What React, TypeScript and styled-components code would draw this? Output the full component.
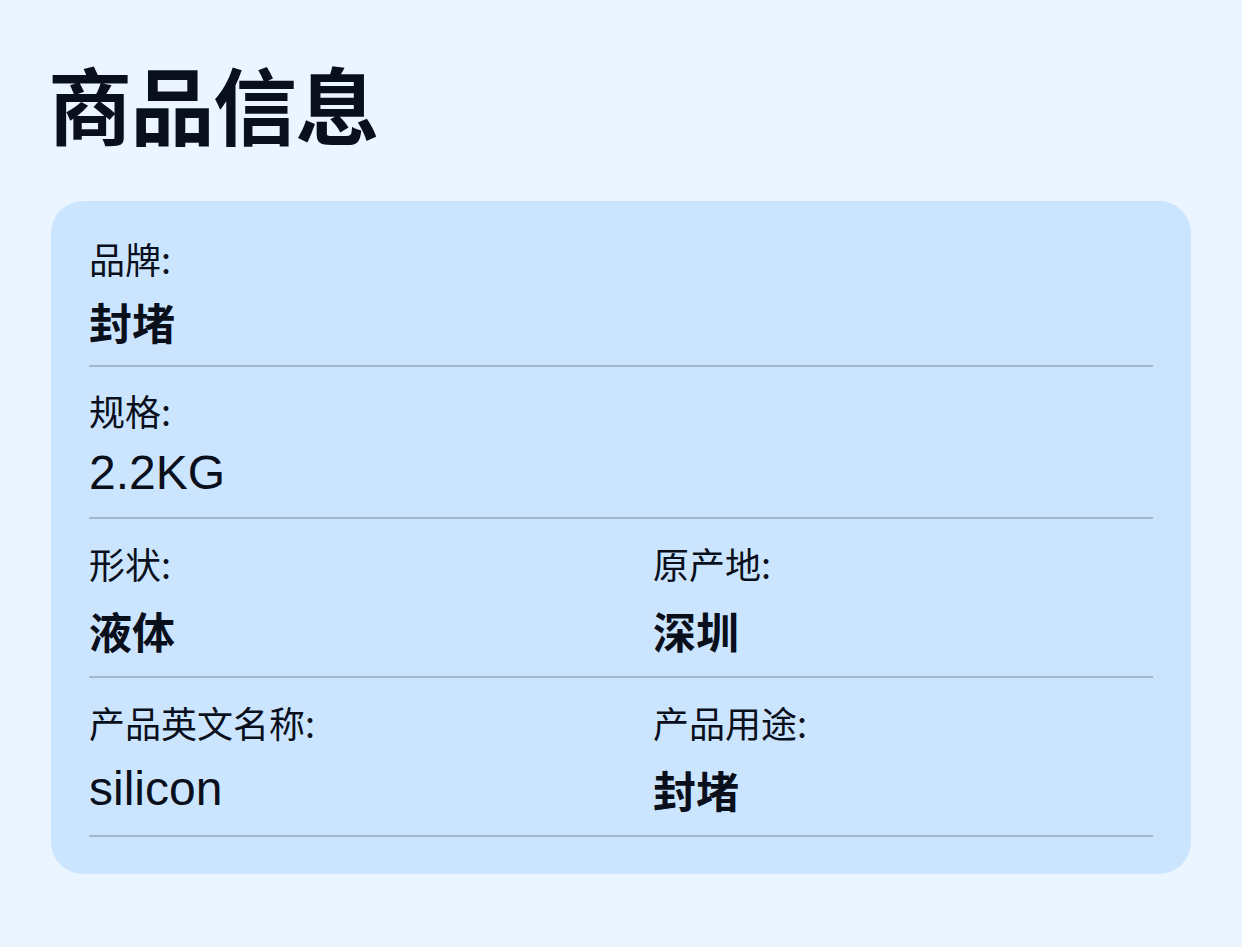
import React from 'react'
import styled, { createGlobalStyle } from 'styled-components'

const GlobalStyle = createGlobalStyle`
  html, body {
    margin: 0;
    padding: 0;
    background: #EBF5FF;
  }
  body {
    font-family: "Noto Sans CJK SC", "Liberation Sans", sans-serif;
    color: #0A0F1C;
  }
`

const Page = styled.div`
  min-height: 947px;
  box-sizing: border-box;
  padding: 54px 51px 40px;
`

const Title = styled.h1`
  margin: 0 0 49px -3px;
  font-size: 84px;
  line-height: 98px;
  font-weight: 700;
  letter-spacing: -1.5px;
`

const Card = styled.div`
  background: #CCE5FF;
  border-radius: 32px;
  padding: 35px 38px 37px;
`

const Row = styled.div<{ $split?: boolean }>`
  display: grid;
  grid-template-columns: ${({ $split }) => ($split ? '1fr 1fr' : '1fr')};
  column-gap: 64px;
  padding: ${({ $split }) => ($split ? '22px 0 18px' : '21px 0 16px')};
  border-bottom: 2px solid #A2B9D0;

  &:first-child {
    padding-top: 0;
  }
`

const Field = styled.div<{ $split?: boolean }>`
  display: flex;
  flex-direction: column;
  gap: ${({ $split }) => ($split ? '17px' : '13px')};
`

const Label = styled.div`
  font-size: 36px;
  line-height: 44px;
  font-weight: 400;
`

const Value = styled.div<{ $latin?: boolean }>`
  font-family: ${({ $latin }) =>
    $latin ? '"Liberation Sans", "Noto Sans CJK SC", sans-serif' : '"Noto Sans CJK SC", "Liberation Sans", sans-serif'};
  font-size: ${({ $latin }) => ($latin ? '48px' : '43px')};
  font-weight: ${({ $latin }) => ($latin ? 400 : 700)};
  line-height: 56px;
`

type Item = { label: string; value: string }

const rows: Item[][] = [
  [{ label: '品牌:', value: '封堵' }],
  [{ label: '规格:', value: '2.2KG' }],
  [
    { label: '形状:', value: '液体' },
    { label: '原产地:', value: '深圳' },
  ],
  [
    { label: '产品英文名称:', value: 'silicon' },
    { label: '产品用途:', value: '封堵' },
  ],
]

const isLatin = (text: string) => /^[\x00-\x7F]+$/.test(text)

const App: React.FunctionComponent = () => {
  return (
    <>
      <GlobalStyle />
      <Page>
        <Title>商品信息</Title>
        <Card>
          {rows.map((row, i) => (
            <Row key={i} $split={row.length > 1}>
              {row.map((item) => (
                <Field key={item.label} $split={row.length > 1}>
                  <Label>{item.label}</Label>
                  <Value $latin={isLatin(item.value)}>{item.value}</Value>
                </Field>
              ))}
            </Row>
          ))}
        </Card>
      </Page>
    </>
  )
}

export default App
